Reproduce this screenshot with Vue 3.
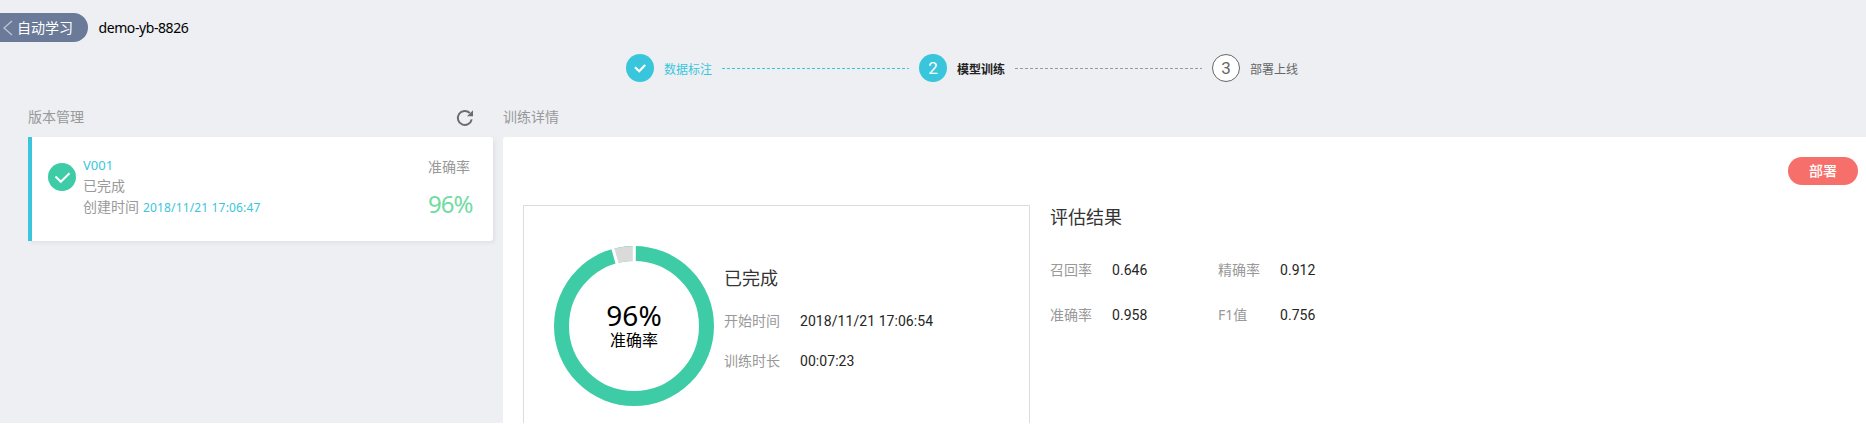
<script setup>
const versions = [{ name: 'V001', status: '已完成', created: '2018/11/21 17:06:47', accuracy: '96%' }]
const metrics = [
  { label: '召回率', value: '0.646' },
  { label: '精确率', value: '0.912' },
  { label: '准确率', value: '0.958' },
  { label: 'F1值', value: '0.756' }
]
</script>

<template>
  <div class="page">
    <header class="top">
      <button class="back">
        <svg width="10" height="16" viewBox="0 0 10 16"><path d="M9 1 L1 8 L9 15" fill="none" stroke="#b9c2d0" stroke-width="1.5" /></svg>
        <span>自动学习</span>
      </button>
      <span class="project">demo-yb-8826</span>
    </header>

    <nav class="steps">
      <span class="dot">
        <svg width="28" height="28" viewBox="0 0 28 28"><path d="M9 13.2 L13.2 17.2 L19.2 11" fill="none" stroke="#fff" stroke-width="2.2" /></svg>
      </span>
      <span class="name done">数据标注</span>
      <i class="line done-line"></i>
      <span class="dot">2</span>
      <span class="name current">模型训练</span>
      <i class="line"></i>
      <span class="dot todo">3</span>
      <span class="name">部署上线</span>
    </nav>

    <main class="content">
      <section class="left">
        <div class="title">
          <span>版本管理</span>
          <svg class="refresh" width="18" height="18" viewBox="0 0 18 18">
            <path d="M15.7 10.4 A7 7 0 1 1 13.8 4" fill="none" stroke="#6c6c6c" stroke-width="2" />
            <path d="M17 1.2 V7.2 H11 Z" fill="#6c6c6c" />
          </svg>
        </div>
        <article v-for="v in versions" :key="v.name" class="card">
          <svg class="ok" width="28" height="28" viewBox="0 0 28 28">
            <circle cx="14" cy="14" r="14" fill="#3ecca7" />
            <path d="M7.5 13.5 L12.8 18.8 L21.5 10.3" fill="none" stroke="#fff" stroke-width="2" />
          </svg>
          <div class="info">
            <div class="blue">{{ v.name }}</div>
            <div>{{ v.status }}</div>
            <div class="created">创建时间<span class="blue">{{ v.created }}</span></div>
          </div>
          <div class="score">
            <div>准确率</div>
            <div class="pct">{{ v.accuracy }}</div>
          </div>
        </article>
      </section>

      <section class="right">
        <div class="title">训练详情</div>
        <div class="panel">
          <button class="deploy">部署</button>
          <div class="details">
            <div class="summary">
              <div class="donut">
                <svg width="160" height="160" viewBox="0 0 160 160">
                  <g fill="none" stroke-width="15" transform="rotate(-90 80 80)">
                    <circle cx="80" cy="80" r="72.5" stroke="#3ecca7" />
                    <circle cx="80" cy="80" r="72.5" stroke="#dadada" pathLength="100" stroke-dasharray="4.2 95.8" stroke-dashoffset="-95.8" />
                  </g>
                  <path d="M80.3 -1 V17 M58.1 0 L63.2 18" stroke="#fff" stroke-width="3" />
                </svg>
                <div class="center">
                  <span class="big">96%</span>
                  <span class="cap">准确率</span>
                </div>
              </div>
              <div class="facts">
                <div class="state">已完成</div>
                <div class="row"><span class="label">开始时间</span><span class="value">2018/11/21 17:06:54</span></div>
                <div class="row"><span class="label">训练时长</span><span class="value">00:07:23</span></div>
              </div>
            </div>
            <div class="result">
              <div class="heading">评估结果</div>
              <div class="grid">
                <div v-for="m in metrics" :key="m.label" class="metric">
                  <span class="label">{{ m.label }}</span><span class="value">{{ m.value }}</span>
                </div>
              </div>
            </div>
          </div>
        </div>
      </section>
    </main>
  </div>
</template>

<style>
body { background: #fff; }
</style>

<style scoped>
.page { box-sizing: border-box; height: 423px; overflow: hidden; background: #edeff3; font-family: "Noto Sans", "Noto Sans CJK SC", sans-serif; font-size: 14px; line-height: 20px; color: #999; display: flex; flex-direction: column; white-space: nowrap; }
button { border: 0; padding: 0; margin: 0; font: inherit; color: #fff; }
svg { display: block; flex: none; }
.top { display: flex; align-items: center; height: 29px; margin-top: 13px; flex: none; }
.back { display: flex; align-items: center; width: 88px; height: 29px; padding-left: 3px; gap: 4px; border-radius: 0 14.5px 14.5px 0; background: #6b7a99; box-sizing: border-box; }
.project { margin-left: 10.5px; color: #000; letter-spacing: -0.42px; }
.steps { display: flex; align-items: center; flex: none; height: 28px; margin: 12px 0 0 626px; font-size: 12px; color: #666; }
.dot { box-sizing: border-box; width: 28px; height: 28px; border-radius: 50%; background: #39c6dc; color: #fff; font: 17px/28px Roboto, sans-serif; text-align: center; }
.todo { background: #fff; border: 1px solid #666; color: #666; line-height: 27px; }
.name { width: 48px; margin: 3px 10px 0; }
.done { color: #39c6dc; }
.current { color: #222; font-weight: 700; }
.line { width: 187px; height: 1px; margin-right: 10px; background: repeating-linear-gradient(90deg, #999 0 3px, transparent 3px 5px); }
.done-line { background: repeating-linear-gradient(90deg, #39c6dc 0 3px, transparent 3px 5px); }
.content { display: flex; gap: 10px; flex: 1; margin: 24px 0 0 28px; }
.left { width: 465px; }
.right { flex: 1; display: flex; flex-direction: column; }
.title { display: flex; justify-content: space-between; height: 31px; box-sizing: border-box; padding-top: 1px; }
.refresh { margin: 2px 19px 0 0; }
.card { display: flex; box-sizing: border-box; height: 104px; background: #fff; border-left: 4px solid #39c6dc; border-radius: 0 3px 3px 0; box-shadow: 2px 2px 4px rgba(0, 0, 0, .06); padding-left: 16px; }
.ok { margin-top: 25.5px; }
.info { margin: 18px 0 0 7px; }
.info > div { height: 21px; line-height: 21px; }
.info > div + div { line-height: 19px; }
.blue { color: #39c6dc; font-size: 13px; }
.created .blue { margin-left: 4px; font-size: 12px; letter-spacing: 0.15px; }
.score { margin: 20px 22px 0 auto; width: 43px; }
.pct { font-size: 24px; line-height: 28px; margin-top: 13px; color: #71dba0; letter-spacing: -1px; }
.panel { flex: 1; background: #fff; border-radius: 3px 0 0 0; display: flex; flex-direction: column; }
.deploy { align-self: flex-end; margin: 20px 8px 0 0; width: 70px; height: 28px; border-radius: 14px; background: #f66f6a; font-weight: 500; }
.details { display: flex; flex: 1; margin: 20px 0 0 20px; }
.summary { box-sizing: border-box; width: 507px; border: 1px solid #dcdcdc; border-bottom: 0; display: flex; padding: 40px 0 0 30px; }
.donut { display: grid; width: 160px; height: 160px; }
.donut > * { grid-area: 1 / 1; }
.center { display: flex; flex-direction: column; align-items: center; color: #000; padding-top: 52px; }
.big { font-size: 28px; line-height: 34px; }
.cap { font-size: 16px; line-height: 16px; }
.facts { margin: 22px 0 0 10px; }
.state { font-size: 18px; color: #333; line-height: 20px; }
.row { display: flex; margin-top: 23px; }
.row + .row { margin-top: 20px; }
.label { width: 76px; color: #999; }
.value { font-family: Roboto, sans-serif; color: #252525; letter-spacing: 0.06px; }
.result { margin-left: 20px; }
.heading { font-size: 18px; line-height: 24px; color: #333; }
.grid { display: grid; grid-template-columns: 168px 168px; row-gap: 25px; margin-top: 31px; }
.metric { display: flex; }
.metric .label { width: 62px; }
</style>
